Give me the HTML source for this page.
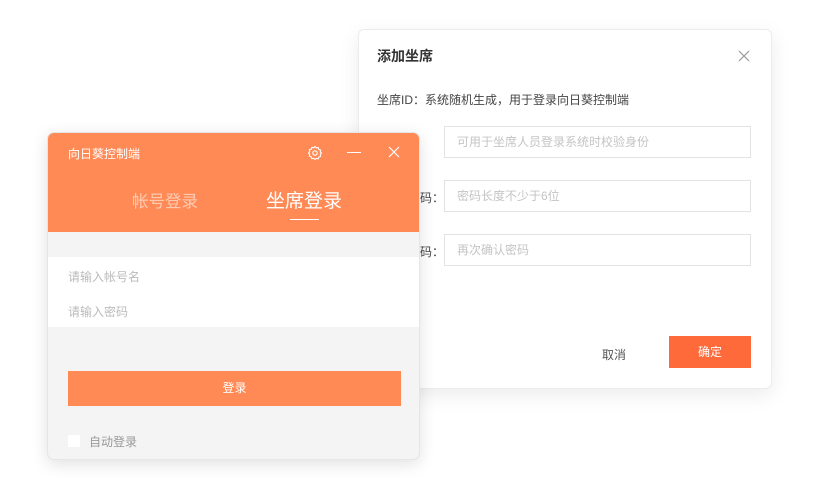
<!DOCTYPE html>
<html><head><meta charset="utf-8"><style>
*{margin:0;padding:0;box-sizing:border-box}
body{width:835px;height:479px;background:#fff;position:relative;overflow:hidden;font-family:"Liberation Sans","Noto Sans CJK SC",sans-serif}
.a{position:absolute}
.dlg{left:358px;top:29px;width:414px;height:360px;background:#fff;border-radius:6px;border:1px solid #ececec;box-shadow:0 6px 20px rgba(0,0,0,.08)}
.inp{left:444px;width:307px;height:32px;border:1px solid #e3e3e3;background:#fff;font-size:12px;color:#c4c4c4;padding-left:12px;line-height:30px}
.win{left:47px;top:132px;width:373px;height:328px;background:#f4f4f4;border-radius:7px;overflow:hidden;box-shadow:0 4px 16px rgba(0,0,0,.12);border:1px solid #e6e6e6}
</style></head><body>
<div class="a dlg"></div>
<div class="a" style="left:377px;top:46px;font-size:14px;font-weight:bold;color:#333">添加坐席</div>
<svg class="a" style="left:738px;top:50px" width="12" height="12"><path d="M1 1L11 11M11 1L1 11" stroke="#999" stroke-width="1.2"/></svg>
<div class="a" style="left:377px;top:91px;font-size:12px;color:#444">坐席ID：系统随机生成，用于登录向日葵控制端</div>
<div class="a inp" style="top:126px">可用于坐席人员登录系统时校验身份</div>
<div class="a" style="left:420px;top:189px;font-size:12px;color:#444">码：</div>
<div class="a inp" style="top:180px">密码长度不少于6位</div>
<div class="a" style="left:420px;top:243px;font-size:12px;color:#444">码：</div>
<div class="a inp" style="top:234px">再次确认密码</div>
<div class="a" style="left:602px;top:346px;font-size:12px;color:#555">取消</div>
<div class="a" style="left:669px;top:336px;width:82px;height:32px;background:#ff6a3a;color:#fff;font-size:12px;text-align:center;line-height:32px">确定</div>

<div class="a win">
 <div class="a" style="left:0;top:0;width:373px;height:99px;background:#ff8a56"></div>
 <div class="a" style="left:20px;top:12px;font-size:12px;color:#fff">向日葵控制端</div>
 <svg class="a" style="left:259px;top:12px" width="16" height="16" viewBox="0 0 16 16"><path d="M8 1.5l1.3 1.4 1.9-.3.6 1.8 1.8.7-.3 1.9L14.5 8l-1.2 1.5.3 1.9-1.8.6-.6 1.8-1.9-.3L8 14.5l-1.3-1.2-1.9.3-.6-1.8-1.8-.7.3-1.9L1.5 8l1.2-1.3-.3-1.9 1.8-.6.7-1.8 1.9.3z" fill="none" stroke="#fff" stroke-width="1.1"/><circle cx="8" cy="8" r="2.2" fill="none" stroke="#fff" stroke-width="1.1"/></svg>
 <div class="a" style="left:299px;top:19px;width:14px;height:1.3px;background:#fff"></div>
 <svg class="a" style="left:340px;top:13px" width="12" height="12"><path d="M1 1L11 11M11 1L1 11" stroke="#fff" stroke-width="1.2"/></svg>
 <div class="a" style="left:84px;top:55px;font-size:16.5px;color:rgba(255,255,255,.55)">帐号登录</div>
 <div class="a" style="left:218px;top:53px;font-size:19px;color:#fff">坐席登录</div>
 <div class="a" style="left:242px;top:86px;width:29px;height:1.3px;background:#fff"></div>
 <div class="a" style="left:0;top:124px;width:373px;height:70px;background:#fff"></div>
 <div class="a" style="left:20px;top:135px;font-size:12px;color:#bbb">请输入帐号名</div>
 <div class="a" style="left:20px;top:170px;font-size:12px;color:#bbb">请输入密码</div>
 <div class="a" style="left:20px;top:238px;width:333px;height:35px;background:#ff8a56;color:#fff;font-size:12px;text-align:center;line-height:35px">登录</div>
 <div class="a" style="left:20px;top:302px;width:12px;height:12px;background:#fff"></div>
 <div class="a" style="left:41px;top:300px;font-size:12px;color:#999">自动登录</div>
</div>
</body></html>
